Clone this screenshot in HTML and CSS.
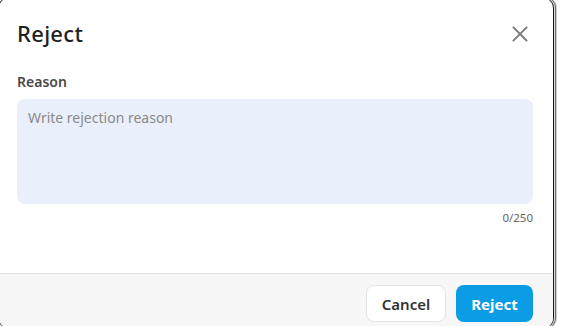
FILE: index.html
```html
<!DOCTYPE html>
<html>
<head>
<meta charset="utf-8">
<link rel="stylesheet" href="styles.css">
</head>
<body>
<div class="dialog">
  <div class="content">
    <div class="header">
      <h1 class="title">Reject</h1>
      <button class="close" aria-label="Close">
        <svg width="16" height="16" viewBox="0 0 16 16"><path d="M1.5 1.5L14.5 14.5M14.5 1.5L1.5 14.5" stroke="#7a7a7a" stroke-width="1.8" stroke-linecap="square"/></svg>
      </button>
    </div>
    <label class="label">Reason</label>
    <div class="textarea">Write rejection reason</div>
    <div class="counter">0/250</div>
  </div>
  <div class="footer">
    <button class="btn btn-cancel">Cancel</button>
    <button class="btn btn-reject">Reject</button>
  </div>
</div>
</body>
</html>
```

FILE: styles.css
```css
html, body {
  margin: 0;
  padding: 0;
  background: #ffffff;
  width: 562px;
  height: 326px;
  overflow: hidden;
}
body {
  font-family: "Noto Sans", "Open Sans", sans-serif;
}
.dialog {
  width: 556px;
  height: 332px;
  margin-top: -3px;
  margin-left: -2px;
  box-sizing: border-box;
  border: 1px solid #1c1c1c;
  border-radius: 11px;
  box-shadow: 1px 0 0 #d8d8d8, 2px 0 0 #6d6d6d, 3px 0 0 #cfcfcf;
  background: #fff;
  display: flex;
  flex-direction: column;
  overflow: hidden;
}
.content {
  padding: 0 20px 0 18px;
  flex: 1;
}
.header {
  display: flex;
  justify-content: space-between;
  align-items: center;
  height: 69px;
}
.title {
  margin: 0;
  font-family: "Noto Sans", "Open Sans", sans-serif;
  font-size: 22px;
  font-weight: 500;
  color: #1f1f1f;
  letter-spacing: 0.3px;
}
.close {
  border: 0;
  background: none;
  padding: 0;
  margin-right: 5px;
  margin-top: 2px;
  width: 16px;
  height: 16px;
  display: flex;
}
.label {
  display: block;
  font-size: 14px;
  font-weight: 600;
  color: #4a4a4a;
  margin-top: 5px;
  line-height: 19px;
}
.textarea {
  margin-top: 8px;
  height: 105px;
  box-sizing: border-box;
  background: #e9f0fc;
  border-radius: 8px;
  padding: 9px 11px;
  font-size: 14px;
  color: #8a8a8a;
  line-height: 20px;
}
.counter {
  text-align: right;
  font-size: 11.5px;
  color: #666;
  margin-top: 6px;
  line-height: 16px;
}
.footer {
  height: 55px;
  flex: none;
  box-sizing: border-box;
  border-top: 1px solid #e3e3e3;
  background: #f7f7f7;
  display: flex;
  justify-content: flex-end;
  align-items: flex-start;
  gap: 10px;
  padding: 11px 20px 0 0;
}
.btn {
  font-family: "Noto Sans", "Open Sans", sans-serif;
  height: 37px;
  border-radius: 8px;
  font-size: 15px;
  font-weight: 600;
  padding: 0;
  box-sizing: border-box;
}
.btn-cancel {
  width: 80px;
  background: #fff;
  border: 1px solid #e4e4e4;
  color: #333;
}
.btn-reject {
  width: 77px;
  background: #0a9de6;
  border: 0;
  color: #fff;
  font-weight: 700;
}
```
